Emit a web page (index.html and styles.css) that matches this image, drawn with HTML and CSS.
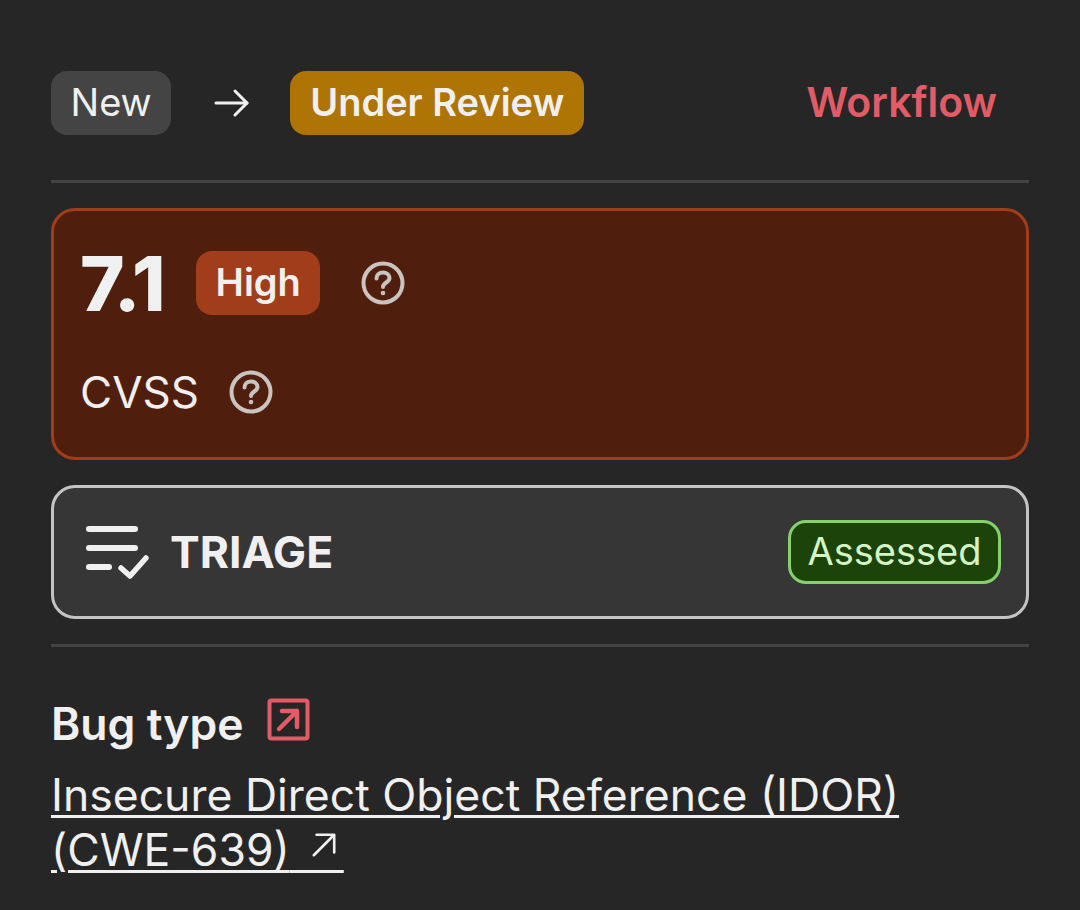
FILE: index.html
```html
<!DOCTYPE html>
<html lang="en">
<head>
    <meta charset="UTF-8">
    <meta name="viewport" content="width=device-width, initial-scale=1.0">
    <title>Report</title>
    <link rel="stylesheet" href="styles.css">
</head>
<body>
    <div class="container">
        <div class="status-row">
            <span class="badge badge-new">New</span>
            <svg class="arrow" width="36" height="32" viewBox="0 0 36 32" fill="none" stroke="#f0f0f0" stroke-width="3" stroke-linecap="round" stroke-linejoin="round">
                <path d="M2 16H33"/>
                <path d="M21 4L33 16L21 28"/>
            </svg>
            <span class="badge badge-review">Under Review</span>
            <a class="workflow">Workflow</a>
        </div>
        <div class="divider"></div>
        <div class="severity-card">
            <div class="score-row">
                <span class="score">7.1</span>
                <span class="badge badge-high">High</span>
                <svg class="help help-score" width="44" height="44" viewBox="0 0 44 44" fill="none" stroke="#c9c4c0" stroke-width="4" stroke-linecap="round">
                    <circle cx="22" cy="22" r="19.5"/>
                    <path d="M15.5 17.5C15.5 13.5 18.5 11.5 22 11.5C25.5 11.5 28.500 13.700 28.500 17C28.500 21.500 22 21.500 22 26"/>
                    <circle cx="22" cy="32" r="1" stroke-width="2.600"/>
                </svg>
            </div>
            <div class="cvss-row">
                <span class="cvss">CVSS</span>
                <svg class="help" width="44" height="44" viewBox="0 0 44 44" fill="none" stroke="#c9c4c0" stroke-width="4" stroke-linecap="round">
                    <circle cx="22" cy="22" r="19.5"/>
                    <path d="M15.5 17.5C15.5 13.5 18.5 11.5 22 11.5C25.5 11.5 28.500 13.700 28.500 17C28.500 21.500 22 21.500 22 26"/>
                    <circle cx="22" cy="32" r="1" stroke-width="2.600"/>
                </svg>
            </div>
        </div>
        <div class="triage-card">
            <svg class="triage-icon" width="66" height="56" viewBox="0 0 66 56" fill="none" stroke="#f0f0f0" stroke-width="6" stroke-linecap="round" stroke-linejoin="round">
                <path d="M3 5H49"/>
                <path d="M3 24H49"/>
                <path d="M3 43H23"/>
                <path d="M35 44L44 52L60 34" stroke-width="5.500"/>
            </svg>
            <span class="triage-title">TRIAGE</span>
            <span class="badge badge-assessed">Assessed</span>
        </div>
        <div class="divider divider-lower"></div>
        <div class="bug-head">
            <span class="bug-label">Bug type</span>
            <svg class="bug-link" width="44" height="44" viewBox="0 0 44 44" fill="none" stroke="#e25c68" stroke-linecap="round" stroke-linejoin="round">
                <rect x="2.500" y="2.500" width="38" height="38" rx="2" stroke-width="4"/>
                <path d="M12 31L30 13M15 13H30V29" stroke-width="4.500"/>
            </svg>
        </div>
        <a class="bug-value">Insecure Direct Object Reference (IDOR) (CWE-639)<span class="ext-wrap">&nbsp;&nbsp;&nbsp;&nbsp;<svg class="ext" width="26" height="26" viewBox="0 0 28 28" fill="none" stroke="#f0f0f0" stroke-width="2.800" stroke-linecap="round" stroke-linejoin="round"><path d="M3 25L25 3M6 3H25V22"/></svg></span></a>
    </div>
</body>
</html>
```

FILE: styles.css
```css
body {
    margin: 0;
    background: #262626;
    color: #f0f0f0;
    font-family: Inter, "Noto Sans", sans-serif;
}
.container {
    width: 978px;
    margin-left: 51px;
    padding-top: 71px;
}
.status-row {
    display: flex;
    align-items: center;
    height: 64px;
}
.badge {
    display: inline-flex;
    align-items: center;
    height: 64px;
    padding: 0 20px 3px;
    border-radius: 16px;
    font-size: 38px;
    box-sizing: border-box;
}
.badge-new {
    padding: 0 19.500px 3px;
    background: #444444;
}
.arrow {
    margin: 0 40px 0 43px;
}
.badge-review {
    background: #ae7404;
    font-weight: 600;
}
.workflow {
    margin: -3px 32px 0 auto;
    color: #e25c68;
    font-size: 41px;
    font-weight: 600;
}
.divider {
    height: 3px;
    margin-top: 45px;
    background: #444444;
}
.severity-card {
    height: 252px;
    margin-top: 25px;
    padding: 40px 26px 0;
    box-sizing: border-box;
    background: #501e0d;
    border: 3px solid #a23d1b;
    border-radius: 24px;
}
.score-row, .cvss-row {
    display: flex;
    align-items: center;
}
.score {
    font-size: 76px;
    font-weight: 800;
    line-height: 64px;
    letter-spacing: -1.500px;
}
.badge-high {
    margin-left: 32px;
    padding: 0 19.500px 3px;
    background: #a23d1b;
    font-weight: 600;
}
.help-score {
    margin-left: 41px;
}
.cvss-row {
    margin-top: 50px;
}
.cvss {
    font-size: 44px;
    margin-right: 30px;
}
.triage-card {
    display: flex;
    align-items: center;
    height: 134px;
    margin-top: 25px;
    padding: 0 25px 0 32px;
    box-sizing: border-box;
    background: #363636;
    border: 3px solid #c4c4c4;
    border-radius: 24px;
}
.triage-title {
    margin-left: 18px;
    font-size: 44.500px;
    font-weight: 700;
}
.badge-assessed {
    margin-left: auto;
    padding: 0 16.500px 2px;
    border-radius: 18px;
    background: #1c4409;
    border: 3px solid #86d16c;
    color: #d5f5c6;
}
.divider-lower {
    margin-top: 25px;
}
.bug-head {
    display: flex;
    align-items: center;
    margin-top: 50px;
}
.bug-label {
    font-size: 44.500px;
    font-weight: 600;
}
.bug-link {
    margin-left: 23px;
    margin-top: -9px;
}
.bug-value {
    display: block;
    margin-top: 17px;
    font-size: 44.500px;
    line-height: 55px;
    text-decoration: underline;
    text-decoration-thickness: 3px;
    text-underline-offset: 4px;
}
.ext-wrap {
    position: relative;
    word-spacing: 1px;
}
.ext {
    position: absolute;
    left: 21px;
    top: 9px;
}
```
